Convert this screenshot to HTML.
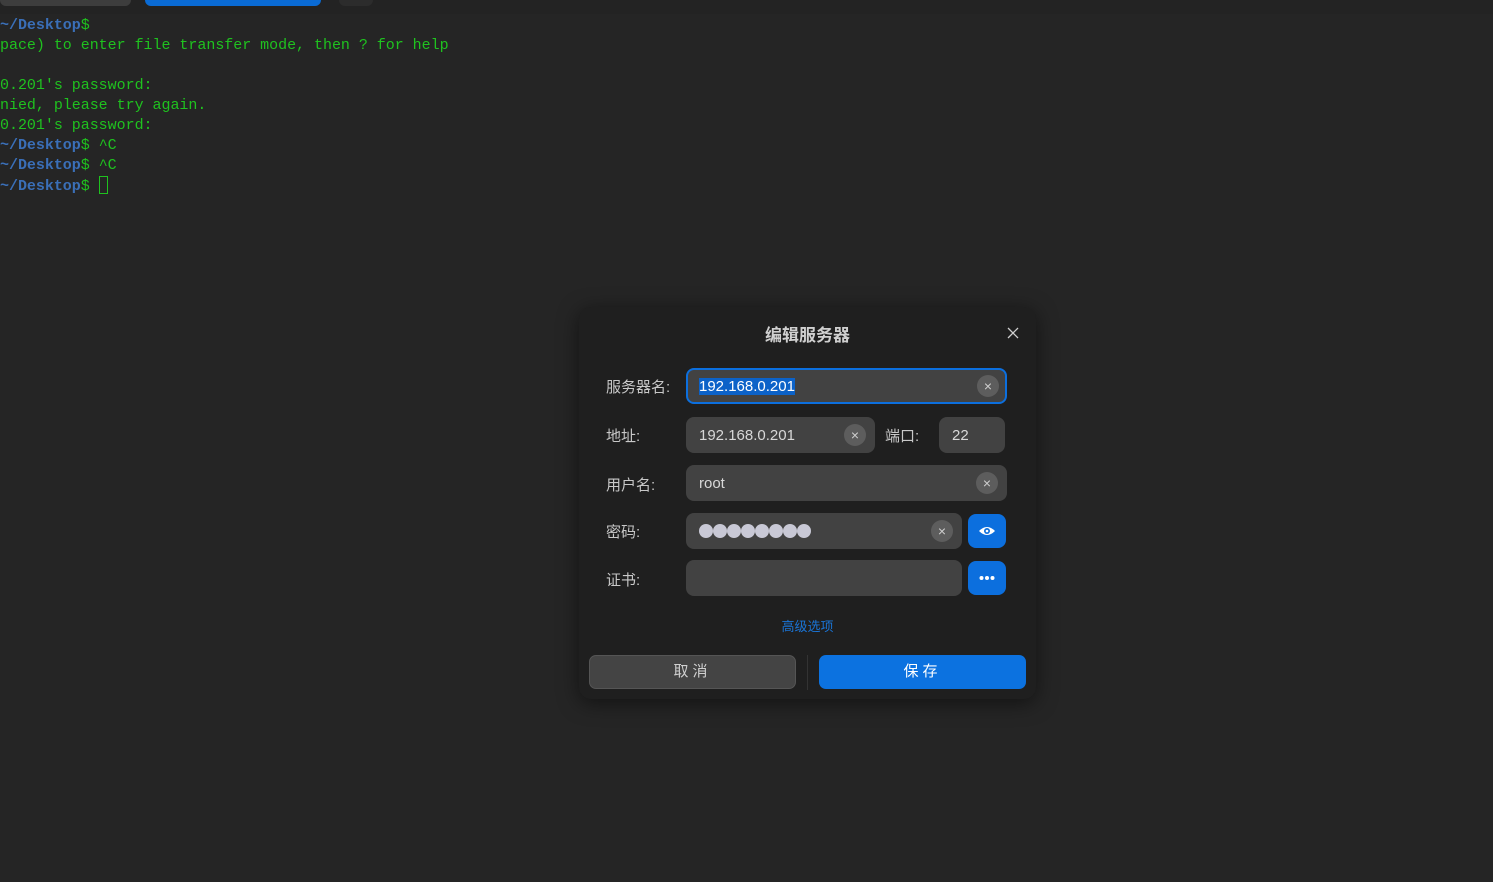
<!DOCTYPE html>
<html><head><meta charset="utf-8"><style>
*{margin:0;padding:0;box-sizing:border-box}
body{width:1493px;height:882px;background:#252525;overflow:hidden;position:relative;font-family:"Liberation Sans","Noto Sans CJK SC",sans-serif}
.top{position:absolute;left:0;top:0;width:1493px;height:14px;background:#232323}
.tab{position:absolute;top:0;height:6px;border-radius:0 0 6px 6px}
.term{position:absolute;left:0;top:16px;font-family:"Liberation Mono",monospace;font-size:15px;line-height:20px;color:#1fc21f;white-space:pre;letter-spacing:-0.03px}
.b{color:#3a6fb8;font-weight:bold}
.cur{display:inline-block;width:9px;height:18px;border:1.5px solid #1fc21f;vertical-align:-4px}
.dlg{position:absolute;left:579px;top:307px;width:457px;height:392px;background:#1f1f1f;border-radius:12px;box-shadow:0 4px 20px rgba(0,0,0,.5);color:#c8c8c8}
.title{position:absolute;left:0;width:100%;top:14px;text-align:center;font-size:17px;font-weight:bold;color:#d0d0d0}
.close{position:absolute;left:428px;top:20px}
.lbl{position:absolute;left:27px;font-size:15px;color:#c8c8c8}
.in{position:absolute;height:36px;background:#424242;border-radius:8px;font-size:15px;color:#d8d8d8;padding-left:13px;line-height:38px}
.clr{position:absolute;top:7px;width:22px;height:22px;border-radius:50%;background:#5d5d5d;color:#cfcfcf;font-size:14px;line-height:22px;text-align:center}
.btnb{position:absolute;width:38px;height:34px;background:#0c6fde;border-radius:8px}
.dots{position:absolute;top:11px;left:13px;display:flex}
.dot{width:14px;height:14px;border-radius:50%;background:#c9c9d6}
</style></head><body>
<div class="top"></div>
<div class="tab" style="left:0;width:131px;background:#3d3d3d"></div>
<div class="tab" style="left:145px;width:176px;background:#0a6bd5"></div>
<div class="tab" style="left:339px;width:34px;background:#2c2c2c"></div>
<div class="term"><span class="b">~/Desktop</span>$
pace) to enter file transfer mode, then ? for help

0.201's password:
nied, please try again.
0.201's password:
<span class="b">~/Desktop</span>$ ^C
<span class="b">~/Desktop</span>$ ^C
<span class="b">~/Desktop</span>$ <span class="cur"></span></div>

<div class="dlg">
<div class="title">编辑服务器</div>
<svg class="close" width="12" height="12" viewBox="0 0 12 12"><path d="M1 1L11 11M11 1L1 11" stroke="#cfcfcf" stroke-width="1.3"/></svg>

<div class="lbl" style="top:69px">服务器名:</div>
<div class="in" style="left:107px;top:61px;width:321px;border:2px solid #0c6fde;line-height:34px;padding-left:11px"><span style="background:#0c62c8;color:#fff">192.168.0.201</span><div class="clr" style="left:289px;top:5px">×</div></div>

<div class="lbl" style="top:118px">地址:</div>
<div class="in" style="left:107px;top:110px;width:189px">192.168.0.201<div class="clr" style="left:158px">×</div></div>
<div class="lbl" style="left:306px;top:118px">端口:</div>
<div class="in" style="left:360px;top:110px;width:66px">22</div>

<div class="lbl" style="top:167px">用户名:</div>
<div class="in" style="left:107px;top:158px;width:321px">root<div class="clr" style="left:290px">×</div></div>

<div class="lbl" style="top:214px">密码:</div>
<div class="in" style="left:107px;top:206px;width:276px"><div class="dots"><span class="dot"></span><span class="dot"></span><span class="dot"></span><span class="dot"></span><span class="dot"></span><span class="dot"></span><span class="dot"></span><span class="dot"></span></div><div class="clr" style="left:245px">×</div></div>
<div class="btnb" style="left:389px;top:207px"><svg width="38" height="34" viewBox="0 0 38 34"><path d="M11 17Q19 9 27 17Q19 25 11 17Z" fill="#fff"/><circle cx="19" cy="17" r="3" fill="#0c6fde"/><circle cx="19" cy="17" r="1.3" fill="#fff"/></svg></div>

<div class="lbl" style="top:262px">证书:</div>
<div class="in" style="left:107px;top:253px;width:276px"></div>
<div class="btnb" style="left:389px;top:254px"><svg width="38" height="34" viewBox="0 0 38 34"><circle cx="13.5" cy="17" r="2" fill="#fff"/><circle cx="19" cy="17" r="2" fill="#fff"/><circle cx="24.5" cy="17" r="2" fill="#fff"/></svg></div>

<div style="position:absolute;left:0;width:100%;top:309px;text-align:center;font-size:13px;color:#1a74d6">高级选项</div>

<div style="position:absolute;left:10px;top:348px;width:207px;height:34px;background:#444;border:1px solid #555;border-radius:7px;text-align:center;line-height:32px;font-size:15px;color:#d0d0d0;letter-spacing:4px">取消</div>
<div style="position:absolute;left:228px;top:348px;width:1px;height:35px;background:#333"></div>
<div style="position:absolute;left:240px;top:348px;width:207px;height:34px;background:#0c72e0;border-radius:7px;text-align:center;line-height:34px;font-size:15px;color:#fff;letter-spacing:4px">保存</div>
</div>
</body></html>
